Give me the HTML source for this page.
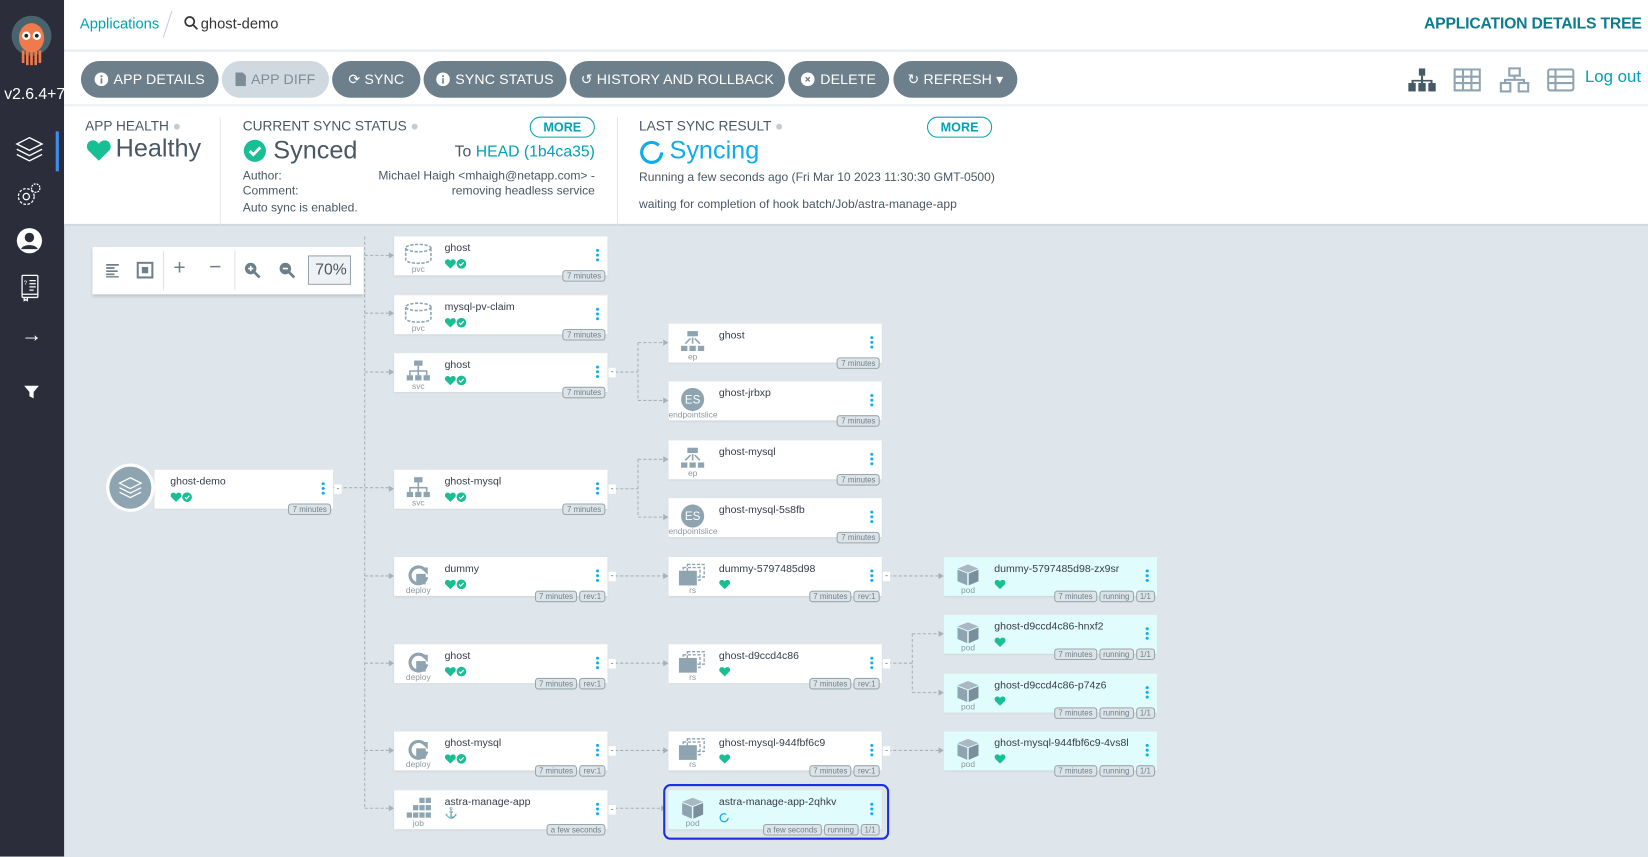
<!DOCTYPE html>
<html><head><meta charset="utf-8"><style>
*{box-sizing:border-box;margin:0;padding:0}
html,body{width:1648px;height:857px;overflow:hidden;background:#dee6eb;font-family:"Liberation Sans",sans-serif}
#w{position:absolute;left:0;top:0;width:1568px;height:815px;transform:scale(1.05102);transform-origin:0 0;background:#dee6eb;overflow:hidden}
.side{position:absolute;left:0;top:0;width:61px;height:815px;background:#2b2d3b}
.top{position:absolute;left:61px;top:0;right:0;height:48px;background:#fff;border-bottom:1px solid #eceff1}
.btnrow{position:absolute;left:61px;top:49px;right:0;height:52px;background:#fff;border-bottom:2px solid #eef1f3}
.b{position:absolute;top:9px;height:35px;border-radius:18px;background:#6d7f8b;color:#fff;font-size:13.5px;line-height:35px;text-align:center;letter-spacing:.1px}
.b svg{vertical-align:-2px;margin-right:5px}
.stat{position:absolute;left:61px;top:101px;right:0;height:114px;background:#fff;color:#495763;border-bottom:2px solid #d0d9de}
.lbl{position:absolute;font-size:13px;color:#495763}
.more{position:absolute;width:62px;height:20px;border:1px solid #00a2b3;border-radius:10px;color:#00a2b3;font-size:12px;text-align:center;line-height:18px;font-weight:bold}
.c{position:absolute;width:203px;height:37px;background:#fff;box-shadow:0 1px 2px rgba(0,0,0,.08)}
.c.p{background:#e0fcfc}
.c .ic{position:absolute;left:9px;top:6px;width:28px;height:22px}
.c .k{position:absolute;left:0;width:46px;top:27px;text-align:center;font-size:8px;color:#8b98a2}
.c .n{position:absolute;left:48px;top:6px;font-size:10px;color:#363c4a}
.c .st{position:absolute;left:48px;top:18px;height:11px}
.c .keb{position:absolute;left:192px;top:11px;width:3px;height:13px;background:radial-gradient(circle,#0dadea 1.3px,transparent 1.6px) 0 0/3px 4.5px repeat-y}
.c .bd{position:absolute;right:2px;top:32px;display:flex;gap:2px}
.c .bd span{display:block;height:11px;padding:0 3px;border:1px solid #9aa6ae;border-radius:3px;background:#dde4e8;font-size:7.5px;line-height:9px;color:#6d7f8b}
.c .mn{position:absolute;left:204px;top:14px;width:7px;height:9px;background:#fff;font-size:8px;line-height:8px;text-align:center;color:#555}
.sico{position:absolute;left:14px;color:#fff}
</style></head><body><div id="w">
<svg width="0" height="0" style="position:absolute">
<defs>
<symbol id="hr" viewBox="0 0 12 11"><path d="M6 10.5L1.2 5.8C-.4 4.2.3 1 3 .8 4.5.7 5.4 1.6 6 2.4 6.6 1.6 7.5.7 9 .8c2.7.2 3.4 3.4 1.8 5z" fill="#18be94"/></symbol>
<symbol id="ck" viewBox="0 0 12 12"><circle cx="6" cy="6" r="5.5" fill="#18be94"/><path d="M3.4 6.1l1.8 1.8 3.5-3.6" stroke="#fff" stroke-width="1.4" fill="none"/></symbol>
<symbol id="pvc" viewBox="0 0 28 22"><g fill="none" stroke="#8fa4b1" stroke-width="1.5" stroke-dasharray="3 1.5"><ellipse cx="14" cy="5" rx="12" ry="3.5"/><path d="M2 5v11c0 2 5.4 3.5 12 3.5S26 18 26 16V5"/></g></symbol>
<symbol id="svc" viewBox="0 0 28 22"><g fill="#8fa4b1"><rect x="10" y="1" width="8" height="5"/><rect x="3" y="15" width="6" height="5"/><rect x="11" y="15" width="6" height="5"/><rect x="19" y="15" width="6" height="5"/></g><path d="M14 6v9M6 15v-4h16v4" stroke="#8fa4b1" stroke-width="1.5" fill="none"/></symbol>
<symbol id="ep" viewBox="0 0 28 22"><g fill="#8fa4b1"><rect x="9" y="1" width="10" height="5"/><rect x="3" y="15" width="6" height="5"/><rect x="11" y="15" width="6" height="5"/><rect x="19" y="15" width="6" height="5"/></g><path d="M14 7v6M12 8l-5 5M16 8l5 5" stroke="#8fa4b1" stroke-width="1.5" fill="none"/></symbol>
<symbol id="dep" viewBox="0 0 28 22"><path d="M20 6A8 8 0 1 0 22 13" stroke="#8fa4b1" stroke-width="3" fill="none"/><path d="M16 4h7v7z" fill="#8fa4b1"/><rect x="12" y="10" width="9" height="10" fill="#8fa4b1"/></symbol>
<symbol id="rs" viewBox="0 0 28 22"><rect x="9" y="1" width="16" height="12" fill="none" stroke="#8fa4b1" stroke-width="1.3" stroke-dasharray="3 1.5"/><rect x="5" y="4" width="16" height="12" fill="none" stroke="#8fa4b1" stroke-width="1.3" stroke-dasharray="3 1.5"/><rect x="1" y="7" width="17" height="14" fill="#8fa4b1"/></symbol>
<symbol id="pod" viewBox="0 0 28 22"><path d="M14 1l10 4-10 4-10-4z" fill="#a9b8c2"/><path d="M4 6l9.3 3.7V21L4 17z" fill="#8fa4b1"/><path d="M24 6l-9.3 3.7V21L24 17z" fill="#7b8e9b"/></symbol>
<symbol id="job" viewBox="0 0 28 22"><g fill="#8fa4b1"><rect x="15" y="1" width="5" height="5"/><rect x="21" y="1" width="5" height="5"/><rect x="9" y="8" width="5" height="5"/><rect x="15" y="8" width="5" height="5"/><rect x="21" y="8" width="5" height="5"/><rect x="3" y="15" width="5" height="5"/><rect x="9" y="15" width="5" height="5"/><rect x="15" y="15" width="5" height="5"/><rect x="21" y="15" width="5" height="5"/></g></symbol>
<symbol id="es" viewBox="0 0 28 22"><circle cx="14" cy="11" r="11" fill="#8fa4b1"/><text x="14" y="15" font-size="11" fill="#fff" text-anchor="middle" font-family="Liberation Sans">ES</text></symbol>
</defs></svg>

<div class="side">
 <svg style="position:absolute;left:10px;top:14px" width="40" height="50" viewBox="0 0 40 50"><circle cx="20" cy="20" r="19" fill="#48626e"/><ellipse cx="20" cy="22" rx="12" ry="14" fill="#ef7b4d"/><circle cx="15" cy="20" r="4" fill="#fff"/><circle cx="25" cy="20" r="4" fill="#fff"/><circle cx="15" cy="20" r="1.8" fill="#222"/><circle cx="25" cy="20" r="1.8" fill="#222"/><path d="M12 34v12M16 34v14M20 34v14M24 34v14M28 34v12" stroke="#ef7b4d" stroke-width="2.5"/></svg>
 <div style="position:absolute;left:4px;top:81px;color:#fff;font-size:15px;white-space:nowrap">v2.6.4+7</div>
 <div style="position:absolute;left:53px;top:125px;width:3px;height:38px;background:#3d8ef0"></div>
 <svg class="sico" style="top:128px" width="28" height="28" viewBox="0 0 28 28" fill="none" stroke="#fff" stroke-width="1.3"><path d="M14 3L2 9l12 6 12-6z"/><path d="M2 14l12 6 12-6M2 19l12 6 12-6"/></svg>
 <svg class="sico" style="top:172px" width="28" height="28" viewBox="0 0 28 28" fill="none" stroke="#fff" stroke-width="1.2"><circle cx="11" cy="15" r="7.5" stroke-dasharray="2.5 1.5"/><circle cx="11" cy="15" r="3"/><circle cx="20" cy="7" r="4" stroke-dasharray="1.8 1"/></svg>
 <svg class="sico" style="top:215px" width="28" height="28" viewBox="0 0 28 28"><circle cx="14" cy="14" r="12" fill="#fff"/><circle cx="14" cy="11" r="4.5" fill="#2b2d3b"/><path d="M6 22c2-5 14-5 16 0" fill="#2b2d3b"/></svg>
 <svg class="sico" style="top:259px" width="28" height="28" viewBox="0 0 28 28" fill="none" stroke="#fff" stroke-width="1.2"><rect x="7" y="3" width="15" height="21" rx="1"/><path d="M7 21h15M9 24v3l1.5-1 1.5 1v-3M14 8h6M14 11h6M14 14h6M14 17h4"/><text x="8.5" y="12" font-size="6" fill="#fff" stroke="none">?</text></svg>
 <div style="position:absolute;left:20px;top:308px;color:#fff;font-size:20px;font-weight:bold">→</div>
 <svg class="sico" style="top:365px;left:22px" width="16" height="16" viewBox="0 0 16 16"><path d="M1 2h14l-5 6v6l-4-2V8z" fill="#fff"/></svg>
</div>

<div class="top">
 <div style="position:absolute;left:15px;top:14px;font-size:14px;color:#00a2b3">Applications</div>
 <div style="position:absolute;left:98px;top:10px;width:1px;height:26px;background:#ccd;transform:rotate(18deg)"></div>
 <svg style="position:absolute;left:114px;top:15px" width="14" height="14" viewBox="0 0 14 14" fill="none" stroke="#333" stroke-width="1.6"><circle cx="5.5" cy="5.5" r="4.3"/><path d="M8.8 8.8l4 4"/></svg>
 <div style="position:absolute;left:130px;top:14px;font-size:14px;color:#333">ghost-demo</div>
 <div style="position:absolute;right:6px;top:14px;font-size:15px;color:#0d7a8e;font-weight:bold;letter-spacing:-.2px">APPLICATION DETAILS TREE</div>
</div>

<div class="btnrow">
 <div class="b" style="left:16px;width:131px"><svg width="13" height="13"><circle cx="6.5" cy="6.5" r="6.5" fill="#fff"/><rect x="5.7" y="5.5" width="1.6" height="5" fill="#6d7f8b"/><circle cx="6.5" cy="3.5" r="1" fill="#6d7f8b"/></svg>APP DETAILS</div>
 <div class="b" style="left:150px;width:102px;background:#cfd9df;color:#7d8d98"><svg width="10" height="13"><path d="M0 0h7l3 3v10H0z" fill="#7d8d98"/></svg>APP DIFF</div>
 <div class="b" style="left:255px;width:84px">⟳ SYNC</div>
 <div class="b" style="left:342px;width:136px"><svg width="13" height="13"><circle cx="6.5" cy="6.5" r="6.5" fill="#fff"/><rect x="5.7" y="5.5" width="1.6" height="5" fill="#6d7f8b"/><circle cx="6.5" cy="3.5" r="1" fill="#6d7f8b"/></svg>SYNC STATUS</div>
 <div class="b" style="left:481px;width:205px">↺ HISTORY AND ROLLBACK</div>
 <div class="b" style="left:689px;width:96px"><svg width="13" height="13"><circle cx="6.5" cy="6.5" r="6.5" fill="#fff"/><path d="M4.5 4.5l4 4M8.5 4.5l-4 4" stroke="#6d7f8b" stroke-width="1.3"/></svg>DELETE</div>
 <div class="b" style="left:789px;width:118px">↻ REFRESH ▾</div>
 <svg style="position:absolute;left:1278px;top:16px" width="28" height="22" viewBox="0 0 28 22" fill="#445a66"><rect x="11" y="0" width="6" height="7"/><rect x="1" y="14" width="7" height="8"/><rect x="10.5" y="14" width="7" height="8"/><rect x="20" y="14" width="7" height="8"/><path d="M13 7h2v4h9v3h-2v-1.5H15V14h-2v-1.5H6V14H4v-3h9z"/></svg>
 <svg style="position:absolute;left:1322px;top:16px" width="26" height="22" viewBox="0 0 26 22" fill="none" stroke="#8fa4b1" stroke-width="2"><rect x="1" y="1" width="24" height="20"/><path d="M9 1v20M17 1v20M1 8h24M1 14h24"/></svg>
 <svg style="position:absolute;left:1365px;top:15px" width="30" height="24" viewBox="0 0 30 24" fill="none" stroke="#8fa4b1" stroke-width="2"><rect x="10" y="1" width="10" height="7"/><rect x="2" y="15" width="9" height="8"/><rect x="19" y="15" width="9" height="8"/><path d="M15 8v4M6 15v-3h18v3"/></svg>
 <svg style="position:absolute;left:1411px;top:16px" width="26" height="22" viewBox="0 0 26 22" fill="none" stroke="#8fa4b1" stroke-width="2"><rect x="1" y="1" width="24" height="20" rx="2"/><path d="M8 1v20M1 8h24M1 14h24"/></svg>
 <div style="position:absolute;left:1447px;top:16px;font-size:16px;color:#00a2b3">Log out</div>
</div>

<div class="stat">
 <div class="lbl" style="left:20px;top:11px">APP HEALTH <span style="color:#c3ccd2">●</span></div>
 <svg style="position:absolute;left:21px;top:31px" width="24" height="22"><use href="#hr"/></svg>
 <div style="position:absolute;left:49px;top:27px;font-size:24px;color:#495763">Healthy</div>
 <div style="position:absolute;left:148px;top:10px;width:1px;height:103px;background:#e4e8eb"></div>
 <div class="lbl" style="left:170px;top:11px">CURRENT SYNC STATUS <span style="color:#c3ccd2">●</span></div>
 <div class="more" style="left:443px;top:10px">MORE</div>
 <svg style="position:absolute;left:170px;top:31px" width="23" height="23"><use href="#ck"/></svg>
 <div style="position:absolute;left:199px;top:29px;font-size:24px;color:#495763">Synced</div>
 <div style="position:absolute;right:1002px;top:35px;font-size:15px;color:#495763">To <span style="color:#00a2b3">HEAD (1b4ca35)</span></div>
 <div style="position:absolute;left:170px;top:60px;font-size:11.5px;color:#495763;line-height:14px">Author:<br>Comment:</div>
 <div style="position:absolute;right:1002px;top:60px;font-size:11.5px;color:#495763;line-height:14px;text-align:right">Michael Haigh &lt;mhaigh@netapp.com&gt; -<br>removing headless service</div>
 <div style="position:absolute;left:170px;top:91px;font-size:11.5px;color:#495763">Auto sync is enabled.</div>
 <div style="position:absolute;left:526px;top:10px;width:1px;height:103px;background:#e4e8eb"></div>
 <div class="lbl" style="left:547px;top:11px">LAST SYNC RESULT <span style="color:#c3ccd2">●</span></div>
 <div class="more" style="left:821px;top:10px">MORE</div>
 <svg style="position:absolute;left:547px;top:32px" width="24" height="24"><circle cx="12" cy="12" r="9.5" fill="none" stroke="#0dadea" stroke-width="3" stroke-dasharray="52 8"/></svg>
 <div style="position:absolute;left:576px;top:29px;font-size:24px;color:#0dadea">Syncing</div>
 <div style="position:absolute;left:547px;top:62px;font-size:11.5px;color:#495763">Running a few seconds ago (Fri Mar 10 2023 11:30:30 GMT-0500)</div>
 <div style="position:absolute;left:547px;top:88px;font-size:11.5px;color:#495763">waiting for completion of hook batch/Job/astra-manage-app</div>
</div>

<svg style="position:absolute;left:0;top:0" width="1568" height="815">
<g stroke="#a6b2ba" stroke-width="1" stroke-dasharray="3 2" fill="none">
<path d="M347 225V769"/>
<path d="M317 464H372M347 243H372M347 298H372M347 354H372M347 548H372M347 631H372M347 714H372M347 769H372"/>
<path d="M585 354H607M607 326V381M607 326H633M607 381H633"/>
<path d="M585 465H607M607 437V492M607 437H633M607 492H633"/>
<path d="M585 548H633M585 631H633M585 714H633M585 769H633"/>
<path d="M845 548H895M845 631H868M868 603V659M868 603H895M868 659H895M845 714H895"/>
</g>
<g fill="#a6b2ba">
<path d="M370 240l5 3-5 3zM370 295l5 3-5 3zM370 351l5 3-5 3zM370 462l5 3-5 3zM370 545l5 3-5 3zM370 628l5 3-5 3zM370 711l5 3-5 3zM370 766l5 3-5 3z"/>
<path d="M631 323l5 3-5 3zM631 378l5 3-5 3zM631 434l5 3-5 3zM631 489l5 3-5 3zM631 545l5 3-5 3zM631 628l5 3-5 3zM631 711l5 3-5 3zM629 766l4 3-4 3z"/>
<path d="M893 545l5 3-5 3zM893 600l5 3-5 3zM893 656l5 3-5 3zM893 711l5 3-5 3z"/>
</g>
</svg>

<div style="position:absolute;left:88px;top:235px;width:258px;height:45px;background:#fff;box-shadow:0 2px 3px rgba(0,0,0,.15)">
 <svg style="position:absolute;left:12px;top:15px" width="14" height="14" stroke="#6d7f8b" stroke-width="1.6"><path d="M1 2h12M1 5h8M1 8h11M1 11h8M1 13.5h12"/></svg>
 <svg style="position:absolute;left:42px;top:14px" width="16" height="16"><rect x="1" y="1" width="14" height="14" fill="none" stroke="#6d7f8b" stroke-width="2"/><rect x="5" y="5" width="6" height="6" fill="#6d7f8b"/></svg>
 <div style="position:absolute;left:67px;top:4px;width:1px;height:37px;background:#dde3e7"></div>
 <div style="position:absolute;left:77px;top:9px;font-size:20px;color:#6d7f8b">+</div>
 <div style="position:absolute;left:111px;top:8px;font-size:20px;color:#6d7f8b">−</div>
 <div style="position:absolute;left:135px;top:4px;width:1px;height:37px;background:#dde3e7"></div>
 <svg style="position:absolute;left:144px;top:14px" width="16" height="16"><circle cx="6.5" cy="6.5" r="5.5" fill="#6d7f8b"/><path d="M10 10l5 5" stroke="#6d7f8b" stroke-width="2.5"/><path d="M4 6.5h5M6.5 4v5" stroke="#fff" stroke-width="1.5"/></svg>
 <svg style="position:absolute;left:177px;top:14px" width="16" height="16"><circle cx="6.5" cy="6.5" r="5.5" fill="#6d7f8b"/><path d="M10 10l5 5" stroke="#6d7f8b" stroke-width="2.5"/><path d="M4 6.5h5" stroke="#fff" stroke-width="1.5"/></svg>
 <div style="position:absolute;left:205px;top:8px;width:41px;height:28px;border:1px solid #9aa6ae;background:#eef2f4;font-size:15px;color:#495763;text-align:right;padding-right:3px;line-height:26px">70%</div>
</div>

<div style="position:absolute;left:101px;top:441px;width:46px;height:46px;border-radius:50%;background:#fff"></div>
<div style="position:absolute;left:104px;top:444px;width:40px;height:40px;border-radius:50%;background:#8fa4b1"></div>
<svg style="position:absolute;left:112px;top:452px" width="24" height="24" viewBox="0 0 28 28" fill="none" stroke="#fff" stroke-width="1.4"><path d="M14 3L2 9l12 6 12-6z"/><path d="M2 14l12 6 12-6M2 19l12 6 12-6"/></svg>
<div class="c" style="left:147px;top:447px;width:170px"><div class="n" style="left:15px">ghost-demo</div><div class="st" style="left:15px"><svg width="11" height="10"><use href="#hr"/></svg><svg width="10" height="10"><use href="#ck"/></svg></div><div class="keb" style="left:159px"></div><div class="bd"><span>7 minutes</span></div><div class="mn" style="left:171px">-</div></div>

<div class="c" style="left:375px;top:225px"><svg class="ic"><use href="#pvc"/></svg><div class="k">pvc</div><div class="n">ghost</div><div class="st"><svg width="11" height="10"><use href="#hr"/></svg><svg width="10" height="10"><use href="#ck"/></svg></div><div class="keb"></div><div class="bd"><span>7 minutes</span></div></div>
<div class="c" style="left:375px;top:281px"><svg class="ic"><use href="#pvc"/></svg><div class="k">pvc</div><div class="n">mysql-pv-claim</div><div class="st"><svg width="11" height="10"><use href="#hr"/></svg><svg width="10" height="10"><use href="#ck"/></svg></div><div class="keb"></div><div class="bd"><span>7 minutes</span></div></div>
<div class="c" style="left:375px;top:336px"><svg class="ic"><use href="#svc"/></svg><div class="k">svc</div><div class="n">ghost</div><div class="st"><svg width="11" height="10"><use href="#hr"/></svg><svg width="10" height="10"><use href="#ck"/></svg></div><div class="keb"></div><div class="bd"><span>7 minutes</span></div><div class="mn">-</div></div>
<div class="c" style="left:375px;top:447px"><svg class="ic"><use href="#svc"/></svg><div class="k">svc</div><div class="n">ghost-mysql</div><div class="st"><svg width="11" height="10"><use href="#hr"/></svg><svg width="10" height="10"><use href="#ck"/></svg></div><div class="keb"></div><div class="bd"><span>7 minutes</span></div><div class="mn">-</div></div>
<div class="c" style="left:375px;top:530px"><svg class="ic"><use href="#dep"/></svg><div class="k">deploy</div><div class="n">dummy</div><div class="st"><svg width="11" height="10"><use href="#hr"/></svg><svg width="10" height="10"><use href="#ck"/></svg></div><div class="keb"></div><div class="bd"><span>7 minutes</span><span>rev:1</span></div><div class="mn">-</div></div>
<div class="c" style="left:375px;top:613px"><svg class="ic"><use href="#dep"/></svg><div class="k">deploy</div><div class="n">ghost</div><div class="st"><svg width="11" height="10"><use href="#hr"/></svg><svg width="10" height="10"><use href="#ck"/></svg></div><div class="keb"></div><div class="bd"><span>7 minutes</span><span>rev:1</span></div><div class="mn">-</div></div>
<div class="c" style="left:375px;top:696px"><svg class="ic"><use href="#dep"/></svg><div class="k">deploy</div><div class="n">ghost-mysql</div><div class="st"><svg width="11" height="10"><use href="#hr"/></svg><svg width="10" height="10"><use href="#ck"/></svg></div><div class="keb"></div><div class="bd"><span>7 minutes</span><span>rev:1</span></div><div class="mn">-</div></div>
<div class="c" style="left:375px;top:752px"><svg class="ic"><use href="#job"/></svg><div class="k">job</div><div class="n">astra-manage-app</div><div class="st" style="font-size:10px;color:#495763;top:17px">⚓</div><div class="keb"></div><div class="bd"><span>a few seconds</span></div><div class="mn">-</div></div>

<div class="c" style="left:636px;top:308px"><svg class="ic"><use href="#ep"/></svg><div class="k">ep</div><div class="n">ghost</div><div class="keb"></div><div class="bd"><span>7 minutes</span></div></div>
<div class="c" style="left:636px;top:363px"><svg class="ic"><use href="#es"/></svg><div class="k">endpointslice</div><div class="n">ghost-jrbxp</div><div class="keb"></div><div class="bd"><span>7 minutes</span></div></div>
<div class="c" style="left:636px;top:419px"><svg class="ic"><use href="#ep"/></svg><div class="k">ep</div><div class="n">ghost-mysql</div><div class="keb"></div><div class="bd"><span>7 minutes</span></div></div>
<div class="c" style="left:636px;top:474px"><svg class="ic"><use href="#es"/></svg><div class="k">endpointslice</div><div class="n">ghost-mysql-5s8fb</div><div class="keb"></div><div class="bd"><span>7 minutes</span></div></div>
<div class="c" style="left:636px;top:530px"><svg class="ic"><use href="#rs"/></svg><div class="k">rs</div><div class="n">dummy-5797485d98</div><div class="st"><svg width="11" height="10"><use href="#hr"/></svg></div><div class="keb"></div><div class="bd"><span>7 minutes</span><span>rev:1</span></div><div class="mn">-</div></div>
<div class="c" style="left:636px;top:613px"><svg class="ic"><use href="#rs"/></svg><div class="k">rs</div><div class="n">ghost-d9ccd4c86</div><div class="st"><svg width="11" height="10"><use href="#hr"/></svg></div><div class="keb"></div><div class="bd"><span>7 minutes</span><span>rev:1</span></div><div class="mn">-</div></div>
<div class="c" style="left:636px;top:696px"><svg class="ic"><use href="#rs"/></svg><div class="k">rs</div><div class="n">ghost-mysql-944fbf6c9</div><div class="st"><svg width="11" height="10"><use href="#hr"/></svg></div><div class="keb"></div><div class="bd"><span>7 minutes</span><span>rev:1</span></div><div class="mn">-</div></div>
<div style="position:absolute;left:631px;top:746px;width:215px;height:53px;border:2.5px solid #1a2fe0;border-radius:7px"></div>
<div class="c p" style="left:636px;top:752px"><svg class="ic"><use href="#pod"/></svg><div class="k">pod</div><div class="n">astra-manage-app-2qhkv</div><div class="st"><svg width="10" height="10"><circle cx="5" cy="5" r="3.8" fill="none" stroke="#0dadea" stroke-width="1.2" stroke-dasharray="20 4"/></svg></div><div class="keb"></div><div class="bd"><span>a few seconds</span><span>running</span><span>1/1</span></div></div>

<div class="c p" style="left:898px;top:530px"><svg class="ic"><use href="#pod"/></svg><div class="k">pod</div><div class="n">dummy-5797485d98-zx9sr</div><div class="st"><svg width="11" height="10"><use href="#hr"/></svg></div><div class="keb"></div><div class="bd"><span>7 minutes</span><span>running</span><span>1/1</span></div></div>
<div class="c p" style="left:898px;top:585px"><svg class="ic"><use href="#pod"/></svg><div class="k">pod</div><div class="n">ghost-d9ccd4c86-hnxf2</div><div class="st"><svg width="11" height="10"><use href="#hr"/></svg></div><div class="keb"></div><div class="bd"><span>7 minutes</span><span>running</span><span>1/1</span></div></div>
<div class="c p" style="left:898px;top:641px"><svg class="ic"><use href="#pod"/></svg><div class="k">pod</div><div class="n">ghost-d9ccd4c86-p74z6</div><div class="st"><svg width="11" height="10"><use href="#hr"/></svg></div><div class="keb"></div><div class="bd"><span>7 minutes</span><span>running</span><span>1/1</span></div></div>
<div class="c p" style="left:898px;top:696px"><svg class="ic"><use href="#pod"/></svg><div class="k">pod</div><div class="n">ghost-mysql-944fbf6c9-4vs8l</div><div class="st"><svg width="11" height="10"><use href="#hr"/></svg></div><div class="keb"></div><div class="bd"><span>7 minutes</span><span>running</span><span>1/1</span></div></div>
</div></body></html>
